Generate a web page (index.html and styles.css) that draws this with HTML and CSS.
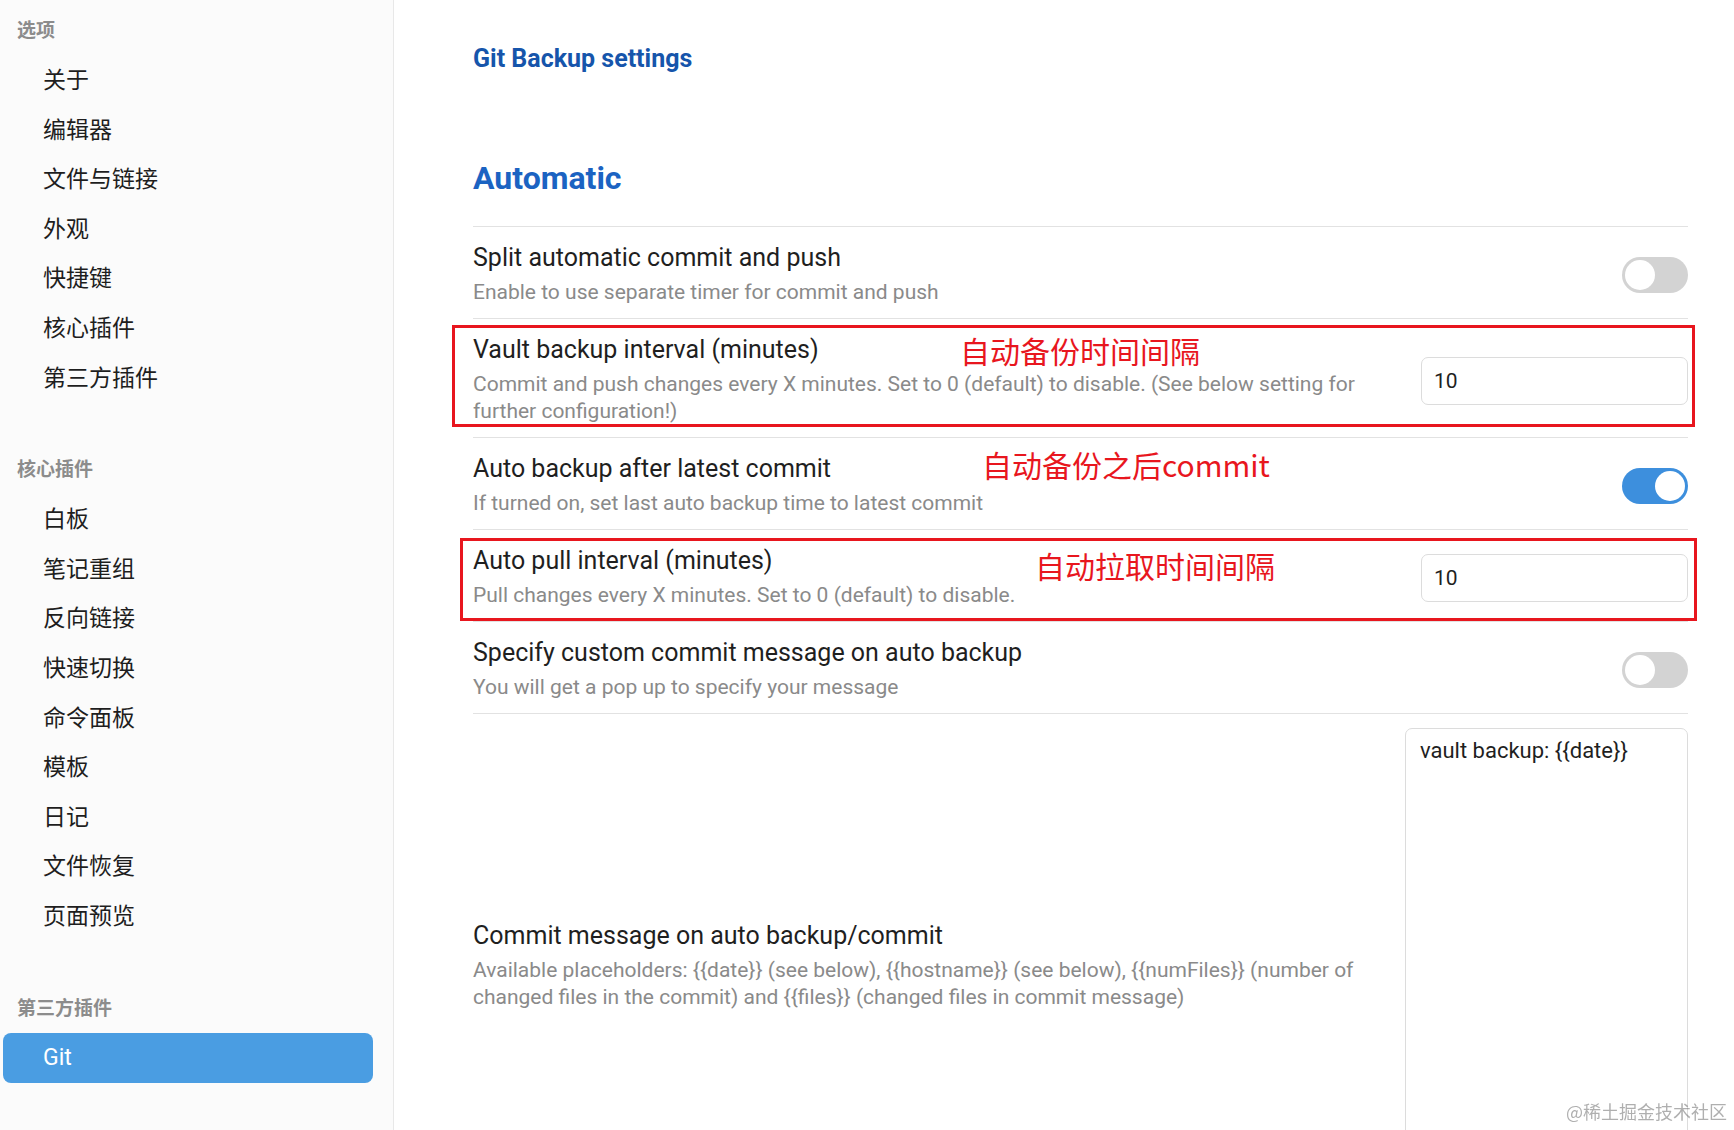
FILE: index.html
```html
<!DOCTYPE html>
<html>
<head>
<meta charset="utf-8">
<link rel="stylesheet" href="styles.css">
</head>
<body>

<div class="modal">
  <nav class="sidebar">
    <div class="nav-group">
      <div class="nav-header">选项</div>
      <div class="nav-item">关于</div>
      <div class="nav-item">编辑器</div>
      <div class="nav-item">文件与链接</div>
      <div class="nav-item">外观</div>
      <div class="nav-item">快捷键</div>
      <div class="nav-item">核心插件</div>
      <div class="nav-item">第三方插件</div>
    </div>
    <div class="nav-group">
      <div class="nav-header">核心插件</div>
      <div class="nav-item">白板</div>
      <div class="nav-item">笔记重组</div>
      <div class="nav-item">反向链接</div>
      <div class="nav-item">快速切换</div>
      <div class="nav-item">命令面板</div>
      <div class="nav-item">模板</div>
      <div class="nav-item">日记</div>
      <div class="nav-item">文件恢复</div>
      <div class="nav-item">页面预览</div>
    </div>
    <div class="nav-group">
      <div class="nav-header">第三方插件</div>
      <div class="nav-item active">Git</div>
    </div>
  </nav>

  <main class="content">
    <h2 class="plugin-title">Git Backup settings</h2>
    <h3 class="section-title">Automatic</h3>

    <div class="setting-item">
      <div class="setting-info">
        <div class="setting-name">Split automatic commit and push</div>
        <div class="setting-desc">Enable to use separate timer for commit and push</div>
      </div>
      <div class="toggle"></div>
    </div>

    <div class="setting-item marked mark-vault">
      <div class="setting-info">
        <div class="setting-name">Vault backup interval (minutes)</div>
        <div class="setting-desc">Commit and push changes every X minutes. Set to 0 (default) to disable. (See below setting for further configuration!)</div>
      </div>
      <input class="text-input" type="text" value="10">
      <span class="note note-vault">自动备份时间间隔</span>
    </div>

    <div class="setting-item">
      <div class="setting-info">
        <div class="setting-name">Auto backup after latest commit</div>
        <div class="setting-desc">If turned on, set last auto backup time to latest commit</div>
      </div>
      <div class="toggle on"></div>
      <span class="note note-after">自动备份之后commit</span>
    </div>

    <div class="setting-item marked mark-pull">
      <div class="setting-info">
        <div class="setting-name">Auto pull interval (minutes)</div>
        <div class="setting-desc">Pull changes every X minutes. Set to 0 (default) to disable.</div>
      </div>
      <input class="text-input" type="text" value="10">
      <span class="note note-pull">自动拉取时间间隔</span>
    </div>

    <div class="setting-item">
      <div class="setting-info">
        <div class="setting-name">Specify custom commit message on auto backup</div>
        <div class="setting-desc">You will get a pop up to specify your message</div>
      </div>
      <div class="toggle"></div>
    </div>

    <div class="setting-item">
      <div class="setting-info">
        <div class="setting-name">Commit message on auto backup/commit</div>
        <div class="setting-desc">Available placeholders: {{date}} (see below), {{hostname}} (see below), {{numFiles}} (number of changed files in the commit) and {{files}} (changed files in commit message)</div>
      </div>
      <textarea class="text-area">vault backup: {{date}}</textarea>
    </div>
  </main>
</div>

<div class="watermark">@稀土掘金技术社区</div>

</body>
</html>
```

FILE: styles.css
```css
html, body {
  margin: 0;
  height: 100%;
  overflow: hidden;
}

body {
  font-family: Roboto, "Noto Sans CJK SC", sans-serif;
  background: #fff;
  color: #1f1f1f;
}

.modal {
  display: flex;
  height: 100vh;
}

/* left navigation */
.sidebar {
  width: 393px;
  flex-shrink: 0;
  background: #fbfbfb;
  border-right: 1px solid #e8e8e8;
  padding-top: 4px;
  font-family: "Noto Sans CJK SC", Roboto, sans-serif;
}

.nav-group {
  margin-bottom: 42px;
}

.nav-header {
  height: 50px;
  line-height: 50px;
  padding-left: 17px;
  font-size: 19px;
  font-weight: 700;
  color: #8c8c8c;
}

.nav-item {
  height: 49.6px;
  line-height: 49px;
  margin: 0 20px 0 3px;
  padding-left: 40px;
  font-size: 23px;
  color: #1e1e1e;
  border-radius: 8px;
}

.nav-item.active {
  height: 50px;
  line-height: 50px;
  margin-top: 1px;
  background: #4a9de2;
  color: #fff;
  font-family: Roboto, sans-serif;
}

/* settings pane */
.content {
  flex: 1;
  padding: 44px 46px 0 79px;
  position: relative;
}

.plugin-title {
  margin: 0;
  font-size: 25px;
  line-height: 30px;
  font-weight: 700;
  color: #1655ab;
}

.section-title {
  margin: 84px 0 28px 0;
  font-size: 32px;
  line-height: 40px;
  font-weight: 700;
  color: #1b63c2;
}

.setting-item {
  position: relative;
  display: flex;
  align-items: center;
  border-top: 1px solid #e2e2e2;
  padding: 17px 0 12px 0;
}

.setting-info {
  flex: 1;
  padding-right: 20px;
}

.setting-name {
  font-size: 25px;
  line-height: 28px;
  color: #1f1f1f;
}

.setting-desc {
  margin-top: 7px;
  font-size: 21px;
  line-height: 27px;
  color: #8a8a8a;
}

/* toggles */
.toggle {
  position: relative;
  width: 66px;
  height: 36px;
  border-radius: 18px;
  background: #d3d3d3;
  flex-shrink: 0;
}

.toggle::after {
  content: "";
  position: absolute;
  top: 3px;
  left: 3px;
  width: 30px;
  height: 30px;
  border-radius: 50%;
  background: #fff;
}

.toggle.on {
  background: #3d8fdd;
}

.toggle.on::after {
  left: 33px;
}

/* inputs */
.text-input {
  width: 267px;
  height: 48px;
  box-sizing: border-box;
  border: 1px solid #dcdcdc;
  border-radius: 7px;
  padding: 0 12px;
  font-family: Roboto, sans-serif;
  font-size: 21px;
  color: #1f1f1f;
  background: #fff;
}

.text-area {
  width: 283px;
  height: 474px;
  box-sizing: border-box;
  border: 1px solid #dcdcdc;
  border-radius: 7px;
  padding: 8px 14px;
  font-family: Roboto, sans-serif;
  font-size: 22px;
  line-height: 28px;
  color: #1f1f1f;
  resize: none;
  margin-top: -3px;
}

/* red annotations drawn over the screenshot */
.marked::after {
  content: "";
  position: absolute;
  border: 3px solid #e8161e;
  pointer-events: none;
}

.mark-vault::after {
  top: 6px;
  bottom: 10px;
  left: -21px;
  right: -7px;
}

.mark-pull::after {
  top: 8px;
  bottom: 0;
  left: -13px;
  right: -9px;
}

.note {
  position: absolute;
  font-family: "Noto Sans CJK SC", sans-serif;
  font-size: 30px;
  line-height: 36px;
  color: #e8161e;
  white-space: nowrap;
}

.note-vault {
  left: 487px;
  top: 13px;
}

.note-after {
  left: 509px;
  top: 8px;
}

.note-pull {
  left: 562px;
  top: 17px;
}

.watermark {
  position: fixed;
  right: 7px;
  bottom: 6px;
  font-family: "Noto Sans CJK SC", sans-serif;
  font-size: 18px;
  color: rgba(110, 110, 110, 0.55);
}
```
